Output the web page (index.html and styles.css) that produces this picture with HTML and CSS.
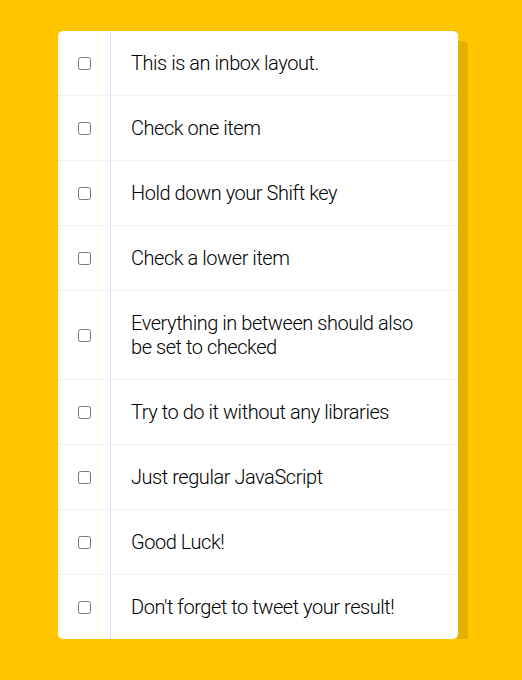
FILE: index.html
```html
<!DOCTYPE html>
<html>
<head>
<meta charset="utf-8">
<link rel="stylesheet" href="styles.css">
</head>
<body>
<div class="inbox">
  <div class="item"><input type="checkbox"><p>This is an inbox layout.</p></div>
  <div class="item"><input type="checkbox"><p>Check one item</p></div>
  <div class="item"><input type="checkbox"><p>Hold down your Shift key</p></div>
  <div class="item"><input type="checkbox"><p>Check a lower item</p></div>
  <div class="item"><input type="checkbox"><p>Everything in between should also be set to checked</p></div>
  <div class="item"><input type="checkbox"><p>Try to do it without any libraries</p></div>
  <div class="item"><input type="checkbox"><p>Just regular JavaScript</p></div>
  <div class="item"><input type="checkbox"><p>Good Luck!</p></div>
  <div class="item"><input type="checkbox"><p>Don't forget to tweet your result!</p></div>
</div>
</body>
</html>
```
FILE: styles.css
```css
html {
  background: #ffc600;
  font-family: Roboto, "Liberation Sans", Arial, sans-serif;
  overflow: hidden;
}
body {
  margin: 0;
}
.inbox {
  width: 400px;
  margin: 31px 0 0 58px;
  background: #fff;
  border-radius: 5px;
  box-shadow: 10px 10px 0 rgba(0, 0, 0, 0.1);
}
.item {
  display: flex;
  align-items: center;
  border-bottom: 1px solid #f1f1f1;
}
.item:last-child {
  border-bottom: 0;
}
.item input {
  margin: 20px 19px 20px 20px;
  width: 13px;
  height: 13px;
}
.item p {
  margin: 0;
  padding: 20px 26px 20px 20px;
  flex: 1;
  font-size: 20px;
  line-height: 24px;
  font-weight: 300;
  letter-spacing: -0.45px;
  color: #000;
  border-left: 1px solid #d1e2ff;
}
```
